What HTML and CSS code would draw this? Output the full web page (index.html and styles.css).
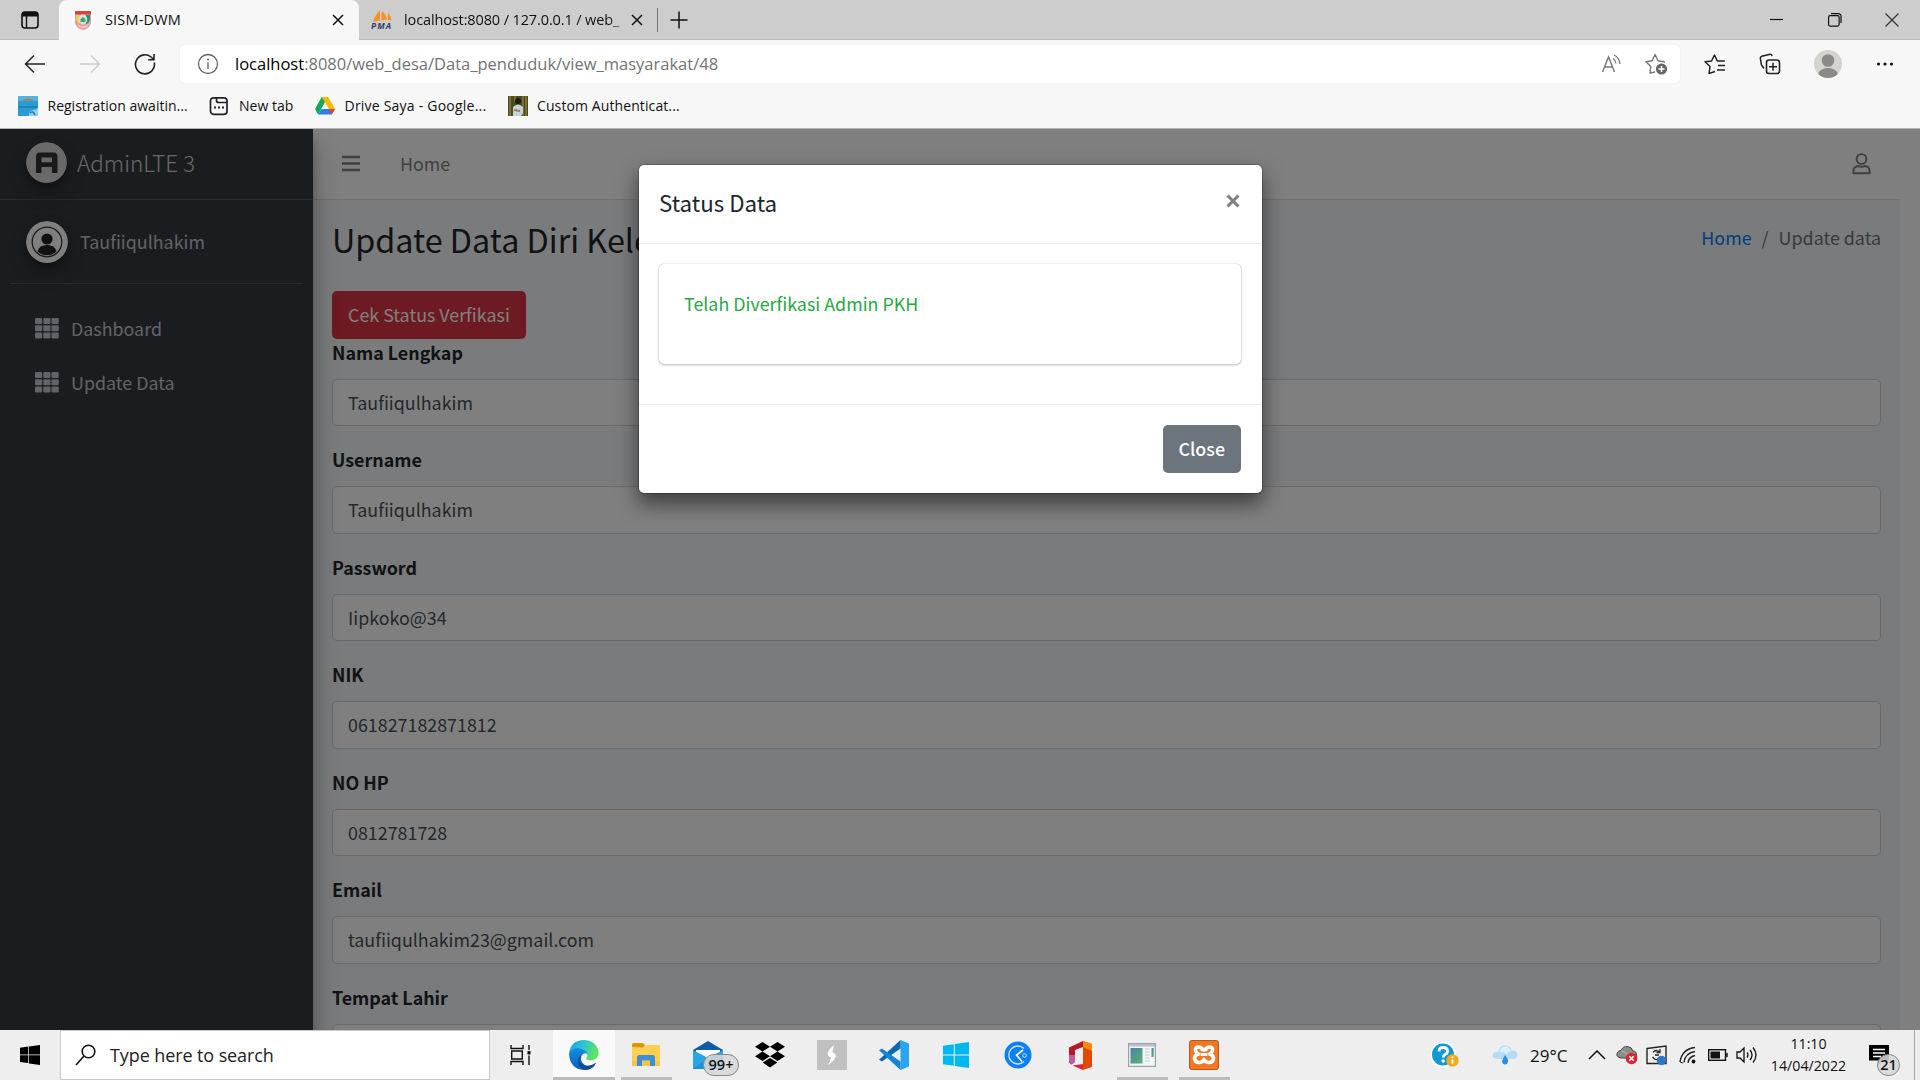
FILE: index.html
```html
<!DOCTYPE html>
<html lang="id">
<head>
<meta charset="utf-8">
<title>SISM-DWM</title>
<link rel="stylesheet" href="styles.css">
</head>
<body>
<div class="screen">

<header class="tabbar">
  <div class="tab-menu"><svg width="20" height="20" viewBox="0 0 20 20"><rect x="2" y="2" width="16" height="16" rx="3" fill="none" stroke="#111" stroke-width="1.6"/><path d="M2 6.5V4.5A2.5 2.5 0 0 1 4.500 2h11A2.500 2.500 0 0 1 18 4.500v2z" fill="#111"/><path d="M6.500 6v12" stroke="#111" stroke-width="1.400"/></svg></div>
  <div class="tab tab-active">
    <svg class="favicon" width="20" height="20" viewBox="0 0 20 20"><rect width="20" height="20" fill="#fff"/><path d="M2 1h16v12q-2 6-8 7-6-1-8-7z" fill="#e99a9a"/><path d="M2 1h16v3.500H2z" fill="#e2403c"/><path d="M3 5h4v9q-3-1-4-4z" fill="#e8d14e"/><path d="M13 5h4v5q-1 3-4 4z" fill="#1f9a62"/><ellipse cx="10" cy="9.500" rx="4.200" ry="5" fill="#cfe6ea"/><path d="M7.500 12V9l2.500-2 2.500 2v3z" fill="#4fa07a"/><path d="M4 14q6 4 12 0l-2 3q-4 2-8 0z" fill="#f3c6c0"/></svg>
    <span class="tab-title t1">SISM-DWM</span>
    <svg class="tab-x" width="12" height="12" viewBox="0 0 12 12"><path d="M1 1l10 10M11 1L1 11" stroke="#111" stroke-width="1.500"/></svg>
  </div>
  <div class="tab">
    <svg class="favicon pma" width="22" height="20" viewBox="0 0 22 20"><path d="M9 0Q4 5 2 12l7-1.500zM11 1q-1 4-.5 9.500l5.500-1q-1-5.500-5-8.500zM17 3q-.5 3.500 0 7l3.500 0q-1-5-3.500-7z" fill="#f7931e"/><text x="0" y="19" font-size="8.500" textLength="20" class="pma-text">PMA</text></svg>
    <span class="tab-title t2">localhost:8080 / 127.0.0.1 / web_</span>
    <svg class="tab-x" width="12" height="12" viewBox="0 0 12 12"><path d="M1 1l10 10M11 1L1 11" stroke="#111" stroke-width="1.500"/></svg>
  </div>
  <div class="tab-divider"></div>
  <svg class="tab-plus" width="18" height="18" viewBox="0 0 18 18"><path d="M9 .5v17M.5 9h17" stroke="#111" stroke-width="1.500"/></svg>
  <div class="win-controls">
    <svg width="14" height="14" viewBox="0 0 14 14"><path d="M0 6.500h13" stroke="#111" stroke-width="1.200"/></svg>
    <svg width="14" height="14" viewBox="0 0 14 14"><rect x=".6" y="2.600" width="10.500" height="10.500" rx="1.500" fill="none" stroke="#111" stroke-width="1.200"/><path d="M3 .6h7.500a2.500 2.500 0 0 1 2.500 2.500V10" fill="none" stroke="#111" stroke-width="1.200"/></svg>
    <svg width="14" height="14" viewBox="0 0 14 14"><path d="M.5.5l13 13M13.500.5l-13 13" stroke="#333" stroke-width="1.200"/></svg>
  </div>
</header>

<div class="toolbar">
  <div class="nav-buttons">
    <svg width="22" height="20" viewBox="0 0 22 20"><path d="M21 10H1.500M10 1.500L1.500 10l8.500 8.500" fill="none" stroke="#222" stroke-width="1.500"/></svg>
    <svg width="22" height="20" viewBox="0 0 22 20"><path d="M1 10h19.500M12 1.500l8.500 8.500-8.500 8.500" fill="none" stroke="#ccc" stroke-width="1.500"/></svg>
    <svg width="22" height="22" viewBox="0 0 22 22"><path d="M20.300 9.500A9.500 9.500 0 1 1 17 4L20 6.600M20 1v5.800h-5.800" fill="none" stroke="#222" stroke-width="1.600"/></svg>
  </div>
  <div class="address">
    <svg width="22" height="22" viewBox="0 0 22 22"><circle cx="11" cy="11" r="9.500" fill="none" stroke="#666" stroke-width="1.300"/><path d="M11 9.500v6.500" stroke="#666" stroke-width="1.400"/><circle cx="11" cy="6.500" r="1" fill="#666"/></svg>
    <span class="url"><b>localhost</b>:8080/web_desa/Data_penduduk/view_masyarakat/48</span>
    <svg class="read" width="22" height="20" viewBox="0 0 22 20"><path d="M1.500 18L7.500 3l6 15M3.600 13h7.800" fill="none" stroke="#777" stroke-width="1.400"/><path d="M12 4.500q2.500 1.500 3 5M13 1q5 2 6 9" fill="none" stroke="#777" stroke-width="1.300"/></svg>
    <svg class="addfav" width="24" height="22" viewBox="0 0 24 22"><path d="M10 19l-5 1 .8-6.500L1 8.800l6.200-1L10 1.500l3 6.300 7 1.200" fill="none" stroke="#777" stroke-width="1.400" stroke-linejoin="round"/><circle cx="16.500" cy="16" r="5.600" fill="#666"/><path d="M16.500 13v6M13.500 16h6" stroke="#fff" stroke-width="1.400"/></svg>
  </div>
  <div class="tools">
    <svg width="22" height="20" viewBox="0 0 22 20"><path d="M11 17.500l-6 2 1-7L1 7.800l6.500-.8L10.500 1l2.800 6h7.500M14 11.500h7M13 16h8" fill="none" stroke="#222" stroke-width="1.500" stroke-linejoin="round"/></svg>
    <svg width="22" height="22" viewBox="0 0 22 22"><path d="M5 15.500L2.500 12 1.300 5.500Q1.200 4 2.800 3.300L11 1.200q1.800-.2 2.200 2" fill="none" stroke="#222" stroke-width="1.500"/><rect x="7.500" y="7" width="13" height="13.500" rx="2.500" fill="none" stroke="#222" stroke-width="1.600"/><path d="M14 9.800v8M10 13.800h8" stroke="#222" stroke-width="1.500"/></svg>
    <svg width="28" height="28" viewBox="0 0 28 28"><defs><clipPath id="av"><circle cx="14" cy="14" r="14"/></clipPath></defs><g clip-path="url(#av)"><rect width="28" height="28" fill="#d5d3cf"/><circle cx="14" cy="10.500" r="6.300" fill="#8c8885"/><ellipse cx="14" cy="25" rx="10" ry="7" fill="#8c8885"/></g></svg>
    <svg width="18" height="4" viewBox="0 0 18 4"><g fill="#111"><circle cx="2.500" cy="2" r="1.600"/><circle cx="9" cy="2" r="1.600"/><circle cx="15.500" cy="2" r="1.600"/></g></svg>
  </div>
</div>

<div class="bookmarks">
  <a class="bm b1"><svg width="20" height="20" viewBox="0 0 20 20"><rect width="20" height="20" fill="#2a9bd2"/><path d="M0 0h20v5H0z" fill="#4fb4e0"/><path d="M5 5q5-3 10 0" stroke="#b07a5a" stroke-width="1.800" fill="none"/><path d="M0 10h20v2H0z" fill="#1c83bb"/><path d="M11 20q-1-5 4-6 4 0 5-3v9z" fill="#8fd0ee"/><path d="M12 17q3-3 5 2" stroke="#1a75ae" fill="none" stroke-width="1.400"/></svg><span>Registration awaitin...</span></a>
  <a class="bm b2"><svg width="20" height="20" viewBox="0 0 20 20"><rect x="1.500" y="1.800" width="16.500" height="16.500" rx="3" fill="none" stroke="#222" stroke-width="1.700"/><path d="M7.500 2v2.500q0 2 2 2H18" fill="none" stroke="#222" stroke-width="1.700"/><path d="M5 11.500h2M9 11.500h2M13 11.500h2" stroke="#222" stroke-width="2"/></svg><span>New tab</span></a>
  <a class="bm b3"><svg width="20" height="18" viewBox="0 0 20 18"><path d="M6.800 0h6.400l-5 8.600-5.100 8.900L0 12z" fill="#0fa958"/><path d="M6.800 0h6.400L20 12h-6.300z" fill="#ffba00"/><path d="M6.300 12H20l-3.200 5.500H3.100z" fill="#2f7de9"/><path d="M13.700 12H20l-3.200 5.500z" fill="#ea4335"/><path d="M10 5.600L13.700 12H6.300z" fill="#f7f7f7"/></svg><span>Drive Saya - Google...</span></a>
  <a class="bm b4"><svg width="20" height="20" viewBox="0 0 20 20"><rect width="20" height="20" fill="#4d4a1c"/><path d="M2 0v20M7 0v6M15 0v20M18 0v20" stroke="#8f8a45" stroke-width="1.200"/><circle cx="10" cy="5" r="3" fill="#201a16"/><path d="M5 20V11q5-5 10 0v6l-2 3z" fill="#c3d3da"/><path d="M6 14l6 1" stroke="#a87858" stroke-width="1.800"/></svg><span>Custom Authenticat...</span></a>
</div>

<main class="page">
  <aside class="sidebar">
    <div class="brand">
      <svg class="brand-logo" width="41" height="41" viewBox="0 0 41 41"><circle cx="20.500" cy="20.500" r="20.500" fill="#d3d3d3"/><path d="M10 31V14.500Q10 10.500 14 10.500h13.500Q31.500 10.500 31.500 14.500V31H26v-6H15.500v6zM15.500 15.500v4.800H26v-4.800z" fill="#2f3336" fill-rule="evenodd"/></svg>
      <span>AdminLTE 3</span>
    </div>
    <div class="user">
      <svg class="user-img" width="42" height="42" viewBox="0 0 42 42"><circle cx="21" cy="21" r="21" fill="#fff"/><circle cx="21" cy="21" r="14.800" fill="none" stroke="#33373a" stroke-width="1.300"/><circle cx="21" cy="18" r="5.600" fill="#222"/><path d="M11.500 30q2-6 9.500-6t9.500 6q-3.500 4.300-9.500 4.300T11.500 30z" fill="#222"/></svg>
      <span>Taufiiqulhakim</span>
    </div>
    <nav class="menu">
      <a><svg width="24" height="21" viewBox="0 0 24 21"><g fill="#c2c7d0"><rect width="7.200" height="6" rx="1"/><rect x="8.300" width="7.200" height="6" rx="1"/><rect x="16.500" width="7.200" height="6" rx="1"/><rect y="7.200" width="7.200" height="6" rx="1"/><rect x="8.300" y="7.200" width="7.200" height="6" rx="1"/><rect x="16.500" y="7.200" width="7.200" height="6" rx="1"/><rect y="14.400" width="7.200" height="6" rx="1"/><rect x="8.300" y="14.400" width="7.200" height="6" rx="1"/><rect x="16.500" y="14.400" width="7.200" height="6" rx="1"/></g></svg><span>Dashboard</span></a>
      <a><svg width="24" height="21" viewBox="0 0 24 21"><g fill="#c2c7d0"><rect width="7.200" height="6" rx="1"/><rect x="8.300" width="7.200" height="6" rx="1"/><rect x="16.500" width="7.200" height="6" rx="1"/><rect y="7.200" width="7.200" height="6" rx="1"/><rect x="8.300" y="7.200" width="7.200" height="6" rx="1"/><rect x="16.500" y="7.200" width="7.200" height="6" rx="1"/><rect y="14.400" width="7.200" height="6" rx="1"/><rect x="8.300" y="14.400" width="7.200" height="6" rx="1"/><rect x="16.500" y="14.400" width="7.200" height="6" rx="1"/></g></svg><span>Update Data</span></a>
    </nav>
  </aside>

  <section class="main">
    <div class="navbar">
      <svg width="18" height="17" viewBox="0 0 18 17"><path d="M0 2h18M0 8.500h18M0 15h18" stroke="#808080" stroke-width="2.600"/></svg>
      <a class="nav-home">Home</a>
      <svg class="nav-user" width="19" height="22" viewBox="0 0 19 22"><circle cx="9.500" cy="6" r="4.900" fill="none" stroke="#808080" stroke-width="1.900"/><path d="M1.300 20.200q-.5-7 4.700-7.200 3.500 1.400 7 0 5.200.2 4.700 7.200z" fill="none" stroke="#808080" stroke-width="1.900" stroke-linejoin="round"/></svg>
    </div>
    <div class="content">
      <div class="heading">
        <h1>Update Data Diri Kele</h1>
        <div class="crumbs"><a>Home</a><i>/</i><span>Update data</span></div>
      </div>
      <button class="btn danger">Cek Status Verfikasi</button>
      <div class="group"><label>Nama Lengkap</label><div class="field">Taufiiqulhakim</div></div>
      <div class="group"><label>Username</label><div class="field">Taufiiqulhakim</div></div>
      <div class="group"><label>Password</label><div class="field">Iipkoko@34</div></div>
      <div class="group"><label>NIK</label><div class="field">061827182871812</div></div>
      <div class="group"><label>NO HP</label><div class="field">0812781728</div></div>
      <div class="group"><label>Email</label><div class="field">taufiiqulhakim23@gmail.com</div></div>
      <div class="group"><label>Tempat Lahir</label><div class="field"></div></div>
    </div>
  </section>

  <div class="backdrop">
    <div class="modal">
      <div class="modal-header"><h5>Status Data</h5><svg width="14" height="14" viewBox="0 0 14 14"><path d="M1.500 1.500l11 11M12.500 1.500l-11 11" stroke="#7f7f7f" stroke-width="3"/></svg></div>
      <div class="modal-body"><div class="card">Telah Diverfikasi Admin PKH</div></div>
      <div class="modal-footer"><button class="btn secondary">Close</button></div>
    </div>
  </div>
</main>

<footer class="taskbar">
  <div class="start"><svg width="20" height="20" viewBox="0 0 20 20"><path d="M0 2.800L8.300 1.600v7.800H0zM9 1.500L20 0v9.400H9zM0 10.200h8.300V18L0 16.900zM9 10.200h11V20L9 18.400z" fill="#000"/></svg></div>
  <div class="search">
    <svg width="22" height="22" viewBox="0 0 22 22"><circle cx="13.500" cy="7.500" r="6.300" fill="none" stroke="#111" stroke-width="1.600"/><path d="M9 12L1 21" stroke="#111" stroke-width="1.600"/></svg>
    <span>Type here to search</span>
  </div>
  <div class="taskview"><svg width="22" height="20" viewBox="0 0 22 20"><path d="M1 0v3.500h12V0M1 20v-3.500h12V20M1.700 6h10.600v8H1.700zM19 0v5M19 10.500V20" fill="none" stroke="#111" stroke-width="1.400"/><rect x="17.500" y="6" width="3" height="3.500" fill="#111"/></svg></div>
  <div class="apps">
    <div class="app active"><svg width="30" height="30" viewBox="0 0 30 30"><defs><linearGradient id="e1" x1="0" y1="0" x2="1" y2=".3"><stop offset="0" stop-color="#1f9fe0"/><stop offset=".5" stop-color="#2cc3d6"/><stop offset="1" stop-color="#5ee45f"/></linearGradient><linearGradient id="e2" x1="0" y1="0" x2="0" y2="1"><stop offset="0" stop-color="#1588dd"/><stop offset="1" stop-color="#0c62bd"/></linearGradient></defs><path d="M0 14Q1.500 0 15 0 24 0 28 7q4 8-1.500 12-4 2.500-9 .5-1-1 .5-2.500 1.500-4-3-6Q8 7 0 14z" fill="url(#e1)"/><path d="M0 14q3-6.500 9.500-5.500 7 .5 9.500 6-3-2.500-6 .5-3 5 2 9.500 5 3.500 11 0Q22 30 15 30 1 29 0 14z" fill="url(#e2)"/><path d="M12 15q-3.500 8 4 10.500 6 1 11.300-3Q24 30 16 30 9 28 9 21q.3-4 3-6z" fill="#114a93"/></svg></div>
    <div class="app running"><svg width="28" height="24" viewBox="0 0 28 24"><path d="M0 2Q0 0 2 0h9l2 2h14q1 0 1 1v20H0z" fill="#ffcf52"/><path d="M0 4V1.500Q0 0 2 0h8.500l2.500 2-2 2.500z" fill="#d9980a"/><path d="M0 18h28v5H0z" fill="#f9c544"/><path d="M5 23v-8.500Q5 12 7.500 12h13Q23 12 23 14.500V23h-5v-5.500h-8V23z" fill="#3d8ed6"/></svg></div>
    <div class="app mail"><svg width="30" height="28" viewBox="0 0 30 28"><path d="M0 9L15 0l15 9v6H0z" fill="#0f5aa9"/><path d="M3 9h24v10H3z" fill="#fff"/><path d="M0 9l15 8 15-8v19H0z" fill="#27a5e4"/><path d="M0 28L15 17l15 11z" fill="#1b93d8"/></svg><span class="badge wide">99+</span></div>
    <div class="app"><svg width="30" height="26" viewBox="0 0 30 26"><path d="M7.500 0L15 4.700 7.500 9.500 0 4.700zM22.500 0L30 4.700 22.500 9.500 15 4.700zM7.500 9.500L15 14.200 7.500 19 0 14.200zM22.500 9.500L30 14.200 22.500 19 15 14.200zM15 16l7.300 4.600L15 25.500l-7.300-4.900z" fill="#000"/></svg></div>
    <div class="app"><svg width="30" height="30" viewBox="0 0 30 30"><rect width="30" height="30" fill="#c0c0c0"/><path d="M17.500 5q-6 4-7 8.500 0 2 3.500 4-.5 4-3 7.500 6.500-4 8-9 0-2-3.500-4 0-3 2-7z" fill="#fff"/></svg></div>
    <div class="app"><svg width="30" height="30" viewBox="0 0 30 30"><path d="M21.500 0L30 3.500v23L21.500 30z" fill="#2aa5f0"/><path d="M0 19.800L21.500 0v8.500L3 21.500z" fill="#0a69b0"/><path d="M3 8.500L21.500 21.500V30L0 10.200z" fill="#1187d3"/></svg></div>
    <div class="app"><svg width="26" height="26" viewBox="0 0 26 26"><path d="M0 3.700l10.800-1.500v10.300H0zM11.800 2L26 0v12.500H11.800zM0 13.500h10.800v10.300L0 22.300zM11.800 13.500H26V26l-14.200-2z" fill="#00b8f1"/></svg></div>
    <div class="app"><svg width="28" height="28" viewBox="0 0 28 28"><circle cx="14" cy="14" r="13.500" fill="#0c7ff2"/><path d="M20 7.500A9 9 0 1 0 20 20.500" fill="none" stroke="#cfe7ff" stroke-width="1.300"/><path d="M19 9l-6.500 5L18 20.500" fill="none" stroke="#fff" stroke-width="1.600"/><circle cx="20.500" cy="14.500" r="1.800" fill="none" stroke="#cfe7ff"/></svg></div>
    <div class="app"><svg class="office" width="23" height="29" viewBox="0 0 23 29"><path d="M0 6.500L14 0v6L6 9v12l-4 2.500-2-2z" fill="#b5192a"/><path d="M0 14h6v7l-3.500 2.500L0 21z" fill="#c05a9a"/><path d="M14 0l9 3v23l-9 3z" fill="#e04a06"/><path d="M14 0l9 3v7l-9-4z" fill="#f58a07"/><path d="M3.500 24.500L14 23v6z" fill="#e0203c"/></svg></div>
    <div class="app running"><svg width="28" height="24" viewBox="0 0 28 24"><rect x=".6" y=".6" width="26.800" height="22.800" fill="#f4f5f6" stroke="#9aa0a8" stroke-width="1.200"/><path d="M1 1h26v2.500H1z" fill="#b9c0c9"/><defs><linearGradient id="w1" x1="0" y1="0" x2="1" y2="1"><stop offset="0" stop-color="#4682b0"/><stop offset="1" stop-color="#5cb36c"/></linearGradient></defs><rect x="2.500" y="5" width="12" height="15.500" fill="url(#w1)"/><path d="M17 6h4.500M17 9h4.500M17 12h4.500M17 15h4.500M17 18h4.500" stroke="#d4d8dc" stroke-width="1.300"/><rect x="23.500" y="5" width="2.200" height="9" fill="url(#w1)"/></svg></div>
    <div class="app running"><svg width="30" height="30" viewBox="0 0 30 30"><rect x=".5" y=".5" width="29" height="29" rx="2.500" fill="#f37623" stroke="#b9571a"/><path d="M13.500 11.500Q14 7.500 10 7 6 7 6.500 10.500 7 13 9.500 14 5.500 15 5.500 18.500 6 22.500 10 22.500q3.500 0 5-3 1.500 3 5 3 4 0 4.500-4 0-3.500-4-4.500 2.500-1 3-3.500Q24 7 20 7q-4 .5-3.500 4.500" fill="none" stroke="#fff" stroke-width="3.600" stroke-linejoin="round"/><path d="M11.500 14.500h7" stroke="#fff" stroke-width="3"/></svg></div>
  </div>
  <div class="tray">
    <div><svg width="30" height="28" viewBox="0 0 30 28"><circle cx="13" cy="14" r="13" fill="#fff"/><circle cx="13" cy="13.500" r="11" fill="#0f97d7"/><path d="M9 10.500q0-4 4.200-4 4.300 0 4.300 3.500 0 2.500-2.500 3.500-1.700.8-1.700 3" fill="none" stroke="#fff" stroke-width="2.800"/><circle cx="13.200" cy="20" r="1.800" fill="#fff"/><circle cx="22.500" cy="19.500" r="6.200" fill="#f3aa1c"/><path d="M22.500 18.500v4.500M22.500 15.500v1.700" stroke="#fff" stroke-width="1.800"/></svg></div>
    <div class="weather"><svg width="26" height="20" viewBox="0 0 26 20"><path d="M6 14Q0 14 .8 9.500 2 6 6 7 8 0 13.500.5 19 1 19.500 5.500q5.500-.5 6 4Q25 14 20.500 14z" fill="#b5dcf5"/><path d="M7 7Q9 1 14 1.500q4 .5 5 4.500-3 0-4 3Q11 6 7 7z" fill="#dcf0fb"/><path d="M13 10q4 5.500 3 7-1 2.500-3 2.500T10 17q0-2 3-7z" fill="#2b8de0"/></svg><span>29°C</span></div>
    <div><svg width="18" height="10" viewBox="0 0 18 10"><path d="M1 9l8-8 8 8" fill="none" stroke="#111" stroke-width="1.500"/></svg></div>
    <div><svg width="22" height="20" viewBox="0 0 22 20"><path d="M5 13Q0 12 1 8.500 2 5.500 5 5.500 7 1 11.500 1.500 16 2 17 6q4 .5 3.500 4T17 13z" fill="#8c8c8c" stroke="#444"/><path d="M5 6q5 0 8 6" stroke="#bbb" fill="none"/><circle cx="15.500" cy="13.500" r="5.800" fill="#d9262c"/><path d="M13.300 11.300l4.400 4.400M17.700 11.300l-4.400 4.400" stroke="#fff" stroke-width="1.600"/></svg></div>
    <div><svg width="22" height="22" viewBox="0 0 22 22"><path d="M1 4.500L20 2v17.500H1z" fill="none" stroke="#222" stroke-width="1.400"/><path d="M7 8.500Q9 5.500 12 7l2 1.500M14 5v3.500h-3.500M13 14q-2 2.500-4.500 1L6.500 13M9 11h4" fill="none" stroke="#222" stroke-width="1.300"/><circle cx="15.500" cy="16.500" r="4.700" fill="#2d76c4"/></svg></div>
    <div><svg width="18" height="18" viewBox="0 0 18 18"><path d="M1 16Q3 3 16 1.500M5 16.500Q6 7 16 5.500M9 17q.5-6 7-7.500" fill="none" stroke="#222" stroke-width="1.400"/><path d="M1 16l3 1" stroke="#222"/><circle cx="14.500" cy="15.500" r="1.900" fill="#111"/></svg></div>
    <div><svg width="20" height="12" viewBox="0 0 20 12"><rect x=".7" y=".7" width="16.800" height="10.600" fill="none" stroke="#111" stroke-width="1.400"/><rect x="2.500" y="2.500" width="9.500" height="7" fill="#111"/><path d="M19 4v4" stroke="#111" stroke-width="1.500"/></svg></div>
    <div><svg width="22" height="18" viewBox="0 0 22 18"><path d="M1 6h3l4-4v14l-4-4H1zM11 6.500q2 2.500 0 5M14 4q4 5 0 10M17 1.500q6 7.500 0 15" fill="none" stroke="#111" stroke-width="1.300"/></svg></div>
    <div class="clock"><span>11:10</span><span>14/04/2022</span></div>
    <div class="notif"><svg width="20" height="20" viewBox="0 0 20 20"><path d="M0 0h20v15.500h-7L9 20v-4.500H0z" fill="#000"/><path d="M4 4.500h12M4 8h12M4 11.500h8" stroke="#fff" stroke-width="1.300"/></svg><span class="badge">21</span></div>
    <div class="show-desktop"></div>
  </div>
</footer>
</div>
</body>
</html>
```
FILE: styles.css
```css
* { box-sizing: border-box; }
body { margin: 0; overflow: hidden; background: #fff; }
svg { display: block; flex: none; }
.screen {
  width: 1920px; height: 1080px; overflow: hidden;
  display: grid; grid-template-rows: 40px 48px 41px 901px 50px;
  font-family: "Open Sans", "Noto Sans", sans-serif; color: #111;
}

/* tab strip */
.tabbar { display: flex; align-items: center; background: #cdcdcd; box-shadow: inset 0 -1px 0 #bdbdbd; font-size: 14.5px; }
.tab-menu { width: 59px; padding-left: 20px; }
.tab { width: 298px; height: 40px; display: flex; align-items: center; padding: 0 14px 0 12px; }
.tab-active { width: 300px; padding: 0 15px 0 14px; background: #f7f7f7; border-radius: 8px 8px 0 0; }
.favicon { margin-right: 11px; }
.tab-title { flex: 1; white-space: nowrap; overflow: hidden; line-height: 24px; }
.t1 { padding-left: 1px; letter-spacing: .17px; }
.t2 { letter-spacing: -.12px; mask-image: linear-gradient(90deg, #000 90%, transparent); }
.pma-text { font-family: "Open Sans", sans-serif; font-weight: 700; font-style: italic; fill: #39396b; }
.tab-divider { width: 1px; height: 24px; background: #777; }
.tab-plus { margin-left: 12px; }
.win-controls { display: flex; gap: 43.500px; margin-left: auto; padding-right: 21px; }

/* toolbar */
.toolbar { display: grid; grid-template-columns: 180px 1500px 240px; align-items: center; background: #f7f7f7; }
.nav-buttons { display: flex; gap: 33px; padding-left: 24px; align-items: center; }
.address { height: 38px; display: flex; align-items: center; background: #fff; border-radius: 5px; padding: 0 11px 0 17px; box-shadow: 0 0 2px #e4e4e4; }
.url { flex: 1; margin-left: 16px; padding-bottom: 2px; font-size: 16.500px; color: #737373; white-space: nowrap; }
.url b { font-weight: 400; color: #000; }
.read { margin-right: 22px; }
.tools { display: grid; grid-template-columns: 55px 55px 61px 53px; padding-left: 7px; justify-items: center; align-items: center; }

/* bookmarks */
.bookmarks { display: flex; align-items: center; background: #f7f7f7; border-bottom: 1px solid #b4b4b4; padding: 0 0 4px 18px; font-size: 14px; }
.bm { display: flex; align-items: center; gap: 9.500px; white-space: nowrap; }
.bm span { padding-bottom: 2px; }
.b1 { width: 191px; }
.b2 { width: 106px; gap: 10px; }
.b3 { width: 193px; letter-spacing: .22px; }
.b4 { gap: 9px; letter-spacing: .1px; }

/* admin page */
.page { position: relative; display: grid; grid-template-columns: 313px 1587px; overflow: hidden; background: #fff; font-family: "Noto Sans CJK SC", sans-serif; font-size: 17.870px; color: #212529; }
.sidebar { background: #343a40; color: #c2c7d0; box-shadow: 0 14px 28px rgba(0,0,0,.25), 0 10px 10px rgba(0,0,0,.22); z-index: 1; }
.brand { height: 71px; display: flex; align-items: center; gap: 10px; padding: 0 0 4px 26px; border-bottom: 1px solid #4b545c; font-size: 22.500px; font-weight: 300; color: #d0d2d4; }
.brand-logo, .user-img { border-radius: 50%; box-shadow: 0 10px 20px rgba(0,0,0,.19), 0 6px 6px rgba(0,0,0,.23); }
.user { height: 84px; margin: 0 10px; display: flex; align-items: center; gap: 12px; padding-left: 16px; border-bottom: 1px solid #4f5962; }
.user span { padding-bottom: 2px; }
.menu { padding: 19px 0 0 35px; }
.menu a { display: flex; align-items: center; gap: 12px; height: 50px; margin-bottom: 4px; }
.main { display: flex; flex-direction: column; min-width: 0; }
.navbar { flex: none; height: 71px; display: flex; align-items: center; padding: 0 29px 1px 29px; border-bottom: 1px solid #dee2e6; background: #fff; color: #808080; }
.nav-home { margin-left: 40px; padding-bottom: 1px; }
.nav-user { margin-left: auto; }
.content { flex: 1; min-height: 0; padding: 0 19px; background: #f4f6f9; }
.heading { height: 91px; display: flex; justify-content: space-between; padding-top: 18px; }
h1 { margin: 0; font-size: 32.300px; font-weight: 400; line-height: 43px; white-space: nowrap; }
.crumbs { display: flex; line-height: 30px; padding-top: 4px; color: #6c757d; }
.crumbs a { color: #007bff; }
.crumbs i { font-style: normal; padding: 0 10px; }
.btn { display: block; border: 0; border-radius: 5px; height: 47.500px; padding: 0 16px; font: inherit; font-weight: 400; line-height: 47px; color: #fff; white-space: nowrap; }
.danger { background: #dc3545; }
.secondary { background: #6c757d; font-weight: 500; }
.group { margin-bottom: 20px; }
.group label { display: block; height: 30px; line-height: 27px; margin-bottom: 10px; font-weight: 700; }
.field { height: 47.500px; line-height: 44px; padding: 0 15px; border: 1px solid #ced4da; border-radius: 5px; background: #fff; color: #495057; }

/* dialog */
.backdrop { position: absolute; inset: 0; z-index: 2; background: rgba(0,0,0,.5); padding-top: 35px; }
.modal { width: 625px; height: 330px; margin-left: 638px; display: flex; flex-direction: column; background: #fff; background-clip: padding-box; border: 1px solid rgba(0,0,0,.2); border-radius: 6px; box-shadow: 0 10px 20px rgba(0,0,0,.5); }
.modal-header { height: 79px; display: flex; justify-content: space-between; padding: 20px 22px 0 20px; border-bottom: 1px solid #e9ecef; }
h5 { margin: 0; font-size: 22.300px; font-weight: 400; line-height: 35px; }
.modal-header svg { margin-top: 9px; }
.modal-body { flex: 1; padding: 20px 21px 20px 20px; }
.card { height: 100px; padding: 24px 25px; line-height: 30px; border-radius: 5px; color: #28a745; box-shadow: 0 0 1px rgba(0,0,0,.3), 0 1px 3px rgba(0,0,0,.25); }
.modal-footer { height: 89px; display: flex; justify-content: flex-end; padding: 20px 21px 20px 20px; border-top: 1px solid #e9ecef; }

/* taskbar */
.taskbar { display: grid; grid-template-columns: 60px 430px 63px 867px 500px; background: #eee; }
.start, .taskview { display: flex; align-items: center; justify-content: center; }
.taskview { padding-right: 2px; }
.search { display: flex; align-items: center; gap: 13px; padding-left: 14px; background: #fff; border: 1px solid #c8c8c8; font-size: 18px; letter-spacing: -.1px; color: #222; }
.apps { display: flex; }
.app { position: relative; width: 62px; height: 50px; display: flex; align-items: center; justify-content: center; }
.active { background: #f9f9f9; border-bottom: 3px solid #bbb; padding-top: 3px; }
.running { background: linear-gradient(#bbb, #bbb) center bottom / 51px 3px no-repeat; }
.badge { position: absolute; left: 21px; top: 24px; min-width: 23px; height: 22px; border: 1px solid #888; border-radius: 11px; background: rgba(215,215,215,.88); font-size: 14.500px; font-weight: 600; line-height: 20px; text-align: center; color: #111; }
.wide { left: 26px; width: 36px; }
.tray { display: grid; grid-template-columns: 50px 110px 34px 26px 34px 27px 33px 26px 96px 58px 6px; }
.tray > div { position: relative; display: flex; align-items: center; justify-content: center; }
.tray .weather { justify-content: flex-start; padding-left: 22px; gap: 12px; font-size: 17px; }
.tray .clock { flex-direction: column; padding-left: 1px; font-size: 14.200px; line-height: 22px; }
.tray .notif { padding-right: 12px; }
.show-desktop { border-left: 1px solid #aaa; }
```
